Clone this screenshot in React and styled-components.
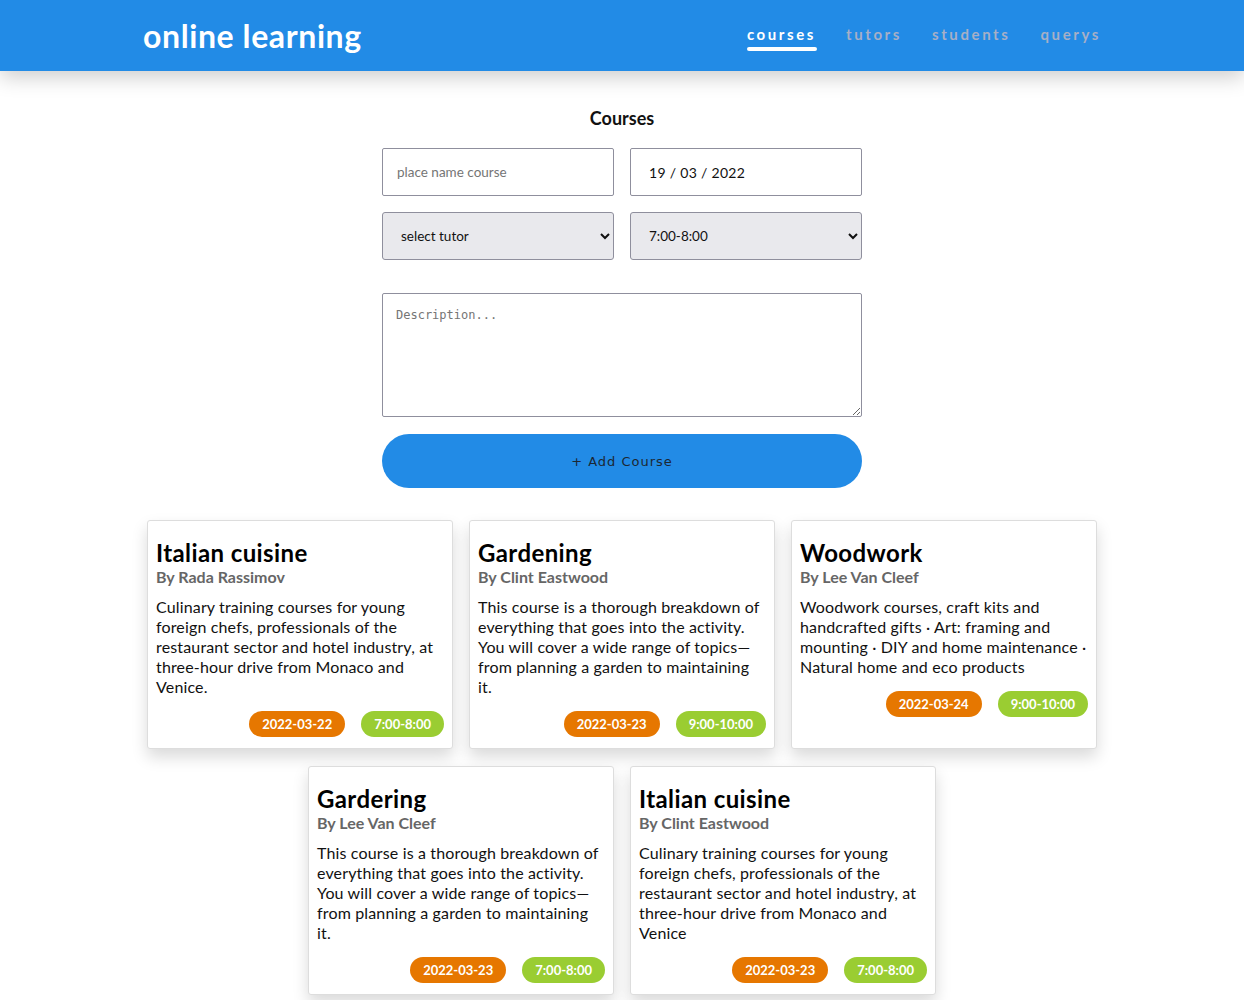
import React from 'react';
import styled, { createGlobalStyle } from 'styled-components';

const GlobalStyle = createGlobalStyle`
  * { box-sizing: border-box; }
  body {
    margin: 0;
    background: #fff;
    font-family: Lato, "Noto Sans", sans-serif;
    color: #111;
  }
`;

const courses = [
  {
    title: 'Italian cuisine',
    tutor: 'Rada Rassimov',
    text: 'Culinary training courses for young foreign chefs, professionals of the restaurant sector and hotel industry, at three-hour drive from Monaco and Venice.',
    date: '2022-03-22',
    time: '7:00-8:00',
  },
  {
    title: 'Gardening',
    tutor: 'Clint Eastwood',
    text: 'This course is a thorough breakdown of everything that goes into the activity. You will cover a wide range of topics\u2014from planning a garden to maintaining it.',
    date: '2022-03-23',
    time: '9:00-10:00',
  },
  {
    title: 'Woodwork',
    tutor: 'Lee Van Cleef',
    text: 'Woodwork courses, craft kits and handcrafted gifts \u00b7 Art: framing and mounting \u00b7 DIY and home maintenance \u00b7 Natural home and eco products',
    date: '2022-03-24',
    time: '9:00-10:00',
  },
  {
    title: 'Gardering',
    tutor: 'Lee Van Cleef',
    text: 'This course is a thorough breakdown of everything that goes into the activity. You will cover a wide range of topics\u2014from planning a garden to maintaining it.',
    date: '2022-03-23',
    time: '7:00-8:00',
  },
  {
    title: 'Italian cuisine',
    tutor: 'Clint Eastwood',
    text: 'Culinary training courses for young foreign chefs, professionals of the restaurant sector and hotel industry, at three-hour drive from Monaco and Venice',
    date: '2022-03-23',
    time: '7:00-8:00',
  },
];

export default function App() {
  return (
    <>
      <GlobalStyle />
      <Header>
        <HeaderInner>
          <Logo>online learning</Logo>
          <Nav>
            <NavItem active>courses</NavItem>
            <NavItem>tutors</NavItem>
            <NavItem>students</NavItem>
            <NavItem>querys</NavItem>
          </Nav>
        </HeaderInner>
      </Header>

      <Main>
        <Title>Courses</Title>
        <Form>
          <Grid>
            <TextInput placeholder='place name course' />
            <DateInput readOnly value='19 / 03 / 2022' />
            <Select defaultValue=''>
              <option value=''>select tutor</option>
              <option>Rada Rassimov</option>
              <option>Clint Eastwood</option>
              <option>Lee Van Cleef</option>
            </Select>
            <Select defaultValue='7:00-8:00'>
              <option>7:00-8:00</option>
              <option>9:00-10:00</option>
            </Select>
          </Grid>
          <Description placeholder='Description...' />
          <AddButton type='button'>+ Add Course</AddButton>
        </Form>

        <Cards>
          {courses.map((c, i) => (
            <Card key={i}>
              <CardTitle>{c.title}</CardTitle>
              <Tutor>By {c.tutor}</Tutor>
              <Text>{c.text}</Text>
              <Badges>
                <Badge color='#e67700'>{c.date}</Badge>
                <Badge color='#9acd32'>{c.time}</Badge>
              </Badges>
            </Card>
          ))}
        </Cards>
      </Main>
    </>
  );
}

const Header = styled.header`
  height: 71px;
  background: #228be6;
  box-shadow: 0 6px 20px rgba(0, 0, 0, 0.2);
  position: relative;
  z-index: 1;
`;

const HeaderInner = styled.div`
  width: 958px;
  height: 100%;
  margin: 0 auto;
  display: flex;
  align-items: center;
  justify-content: space-between;
`;

const Logo = styled.h1`
  margin: 0;
  color: #fff;
  font-size: 32px;
  font-weight: 700;
  letter-spacing: 0.6px;
`;

const Nav = styled.nav`
  display: flex;
  gap: 30px;
  margin-top: 2px;
`;

const NavItem = styled.a`
  position: relative;
  font-size: 15px;
  font-weight: 700;
  letter-spacing: 2.6px;
  color: ${p => (p.active ? '#fff' : '#a6afc6')};
  padding-bottom: 6px;
  cursor: pointer;

  &::after {
    content: '';
    display: ${p => (p.active ? 'block' : 'none')};
    position: absolute;
    left: 0;
    right: -1px;
    bottom: -2px;
    height: 4px;
    border-radius: 2px;
    background: #fff;
  }
`;

const Main = styled.main`
  padding: 36px 0 40px;
`;

const Title = styled.h2`
  margin: 0 0 19px;
  text-align: center;
  font-size: 18px;
  line-height: 22px;
  font-weight: 700;
`;

const Form = styled.form`
  width: 480px;
  margin: 0 auto;
  display: flex;
  flex-direction: column;
`;

const Grid = styled.div`
  display: grid;
  grid-template-columns: 1fr 1fr;
  gap: 16px;
`;

const TextInput = styled.input`
  height: 48px;
  padding: 0 14px;
  border: 1px solid #8f8f9d;
  border-radius: 2px;
  font-family: inherit;
  font-size: 13.5px;
  color: #111;
  &::placeholder { color: #757575; }
`;

const DateInput = styled(TextInput)`
  padding: 0 18px;
  font-size: 14px;
  letter-spacing: 0.3px;
`;

const Select = styled.select`
  height: 48px;
  padding: 0 14px;
  border: 1px solid #8f8f9d;
  border-radius: 3px;
  background-color: #e9e9ed;
  font-family: inherit;
  font-size: 13.5px;
  color: #111;
`;

const Description = styled.textarea`
  margin-top: 33px;
  height: 124px;
  padding: 14px 13px;
  border: 1px solid #8f8f9d;
  border-radius: 2px;
  font-family: "DejaVu Sans Mono", monospace;
  font-size: 12px;
  &::placeholder { color: #757575; }
`;

const AddButton = styled.button`
  margin-top: 17px;
  height: 54px;
  border: none;
  border-radius: 27px;
  background: #228be6;
  color: #1c2733;
  font-family: "DejaVu Sans", sans-serif;
  font-size: 13px;
  letter-spacing: 1px;
  cursor: pointer;
`;

const Cards = styled.div`
  width: 950px;
  margin: 32px auto 0;
  display: flex;
  flex-wrap: wrap;
  justify-content: center;
  gap: 17px 16px;
`;

const Card = styled.div`
  width: 306px;
  padding: 16px 8px 11px;
  background: #fff;
  border: 1px solid #ddd;
  border-radius: 3px;
  box-shadow: 0 8px 16px rgba(0, 0, 0, 0.15);
  display: flex;
  flex-direction: column;
`;

const CardTitle = styled.h3`
  margin: 2px 0 0;
  font-size: 24px;
  line-height: 28px;
  font-weight: 700;
  letter-spacing: 0.4px;
  color: #000;
`;

const Tutor = styled.div`
  font-size: 16px;
  line-height: 20px;
  font-weight: 700;
  color: #666;
`;

const Text = styled.p`
  margin: 10px 0 0;
  font-size: 16px;
  line-height: 20px;
  letter-spacing: 0.15px;
  color: #111;
`;

const Badges = styled.div`
  margin-top: 14px;
  display: flex;
  justify-content: flex-end;
  gap: 16px;
`;

const Badge = styled.span`
  height: 26px;
  padding: 0 13px;
  border-radius: 13px;
  background: ${p => p.color};
  color: #fff;
  font-size: 13px;
  font-weight: 700;
  line-height: 26px;
`;
